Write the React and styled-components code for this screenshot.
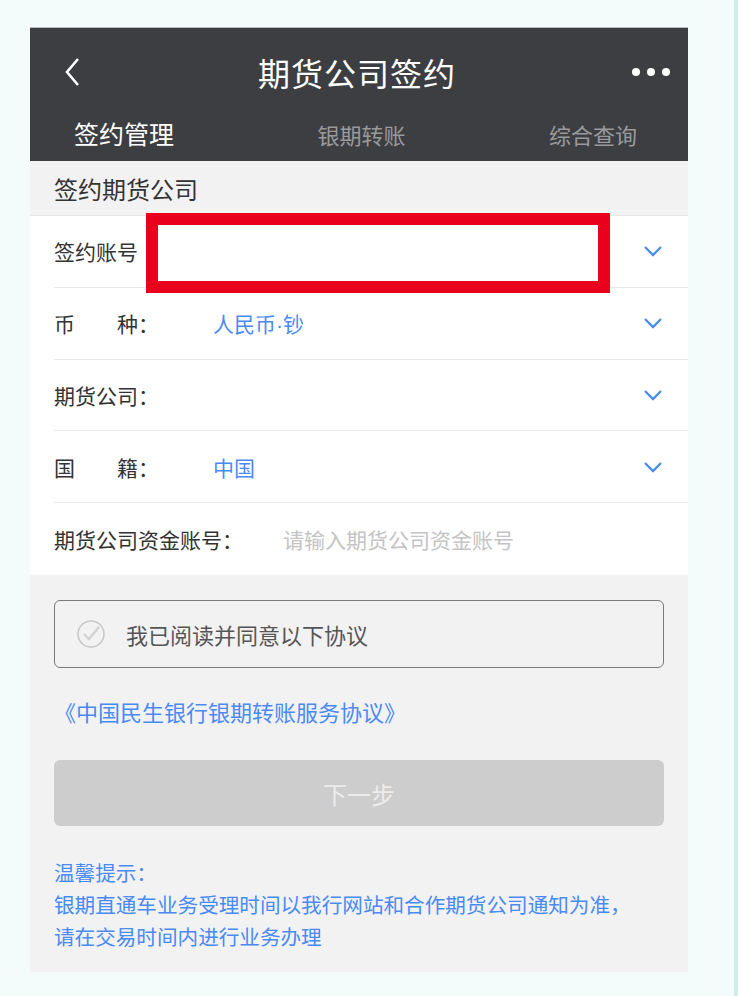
import styled, { createGlobalStyle } from 'styled-components'

const GlobalStyle = createGlobalStyle`
  html, body {
    margin: 0;
    padding: 0;
    background: #f4fbfb;
  }
  body {
    font-family: "Noto Sans CJK SC", "Noto Sans", sans-serif;
  }
`

const Page = styled.div`
  width: 738px;
  height: 996px;
  box-sizing: border-box;
  padding: 27px 0 0 30px;
  background: #f4fbfb;
  border-right: 4px solid #cdeeed;
`

const Phone = styled.div`
  width: 658px;
  height: 945px;
  background: #f2f2f2;
  display: flex;
  flex-direction: column;
  position: relative;
`

const Header = styled.div`
  background: #3d3e42;
  border-top: 1px solid #b8bcbc;
`

const TitleBar = styled.div`
  height: 88px;
  display: flex;
  align-items: center;
  justify-content: space-between;
  padding: 0 16px 0 34px;
`

const Title = styled.h1`
  margin: 0;
  color: #fff;
  font-size: 32px;
  font-weight: 400;
  letter-spacing: 1px;
`

const Dots = styled.div`
  display: flex;
  gap: 7px;
  width: 40px;
`

const Dot = styled.span`
  width: 8px;
  height: 8px;
  border-radius: 50%;
  background: #fff;
`

const Tabs = styled.div`
  height: 45px;
  display: flex;
  align-items: flex-start;
  justify-content: space-between;
  padding: 0 51px 0 44px;
`

const Tab = styled.span`
  color: ${p => (p.active ? '#fff' : '#9a9a9c')};
  font-size: ${p => (p.active ? '25px' : '22px')};
  line-height: ${p => (p.active ? '34px' : '32px')};
  margin-top: ${p => (p.active ? '0' : '2px')};
`

const SectionHead = styled.div`
  height: 55px;
  display: flex;
  align-items: center;
  padding-left: 24px;
  color: #333;
  font-size: 24px;
  border-bottom: 1px solid #e6e6e6;
  box-sizing: border-box;
`

const Form = styled.div`
  background: #fff;
`

const Row = styled.div`
  height: ${p => (p.last ? '72px' : '71.8px')};
  margin-left: 24px;
  padding-right: 25px;
  display: flex;
  align-items: center;
  box-sizing: border-box;
  border-bottom: ${p => (p.last ? 'none' : '1px solid #e8e8e8')};
  position: relative;
`

const Label = styled.span`
  width: ${p => (p.wide ? '229px' : '159px')};
  flex-shrink: 0;
  color: #333;
  font-size: 21px;
  white-space: pre;
`

const Value = styled.span`
  flex: 1;
  color: ${p => (p.placeholder ? '#c4c4c4' : '#4a8af4')};
  font-size: 21px;
`

const MidDot = styled.span`
  font-family: "Liberation Sans", sans-serif;
`

const Body = styled.div`
  flex: 1;
  padding: 25px 24px 0;
  display: flex;
  flex-direction: column;
`

const AgreeBox = styled.div`
  height: 68px;
  box-sizing: border-box;
  border: 1px solid #7a7a7a;
  border-radius: 6px;
  display: flex;
  align-items: center;
  padding-left: 21px;
  gap: 20px;
  color: #555;
  font-size: 22px;
`

const Protocol = styled.a`
  margin-top: 26px;
  color: #4a8af4;
  font-size: 22px;
  line-height: 34px;
  text-decoration: none;
`

const NextButton = styled.button`
  margin-top: 32px;
  height: 66px;
  border: 0;
  border-radius: 6px;
  background: #cdcdcd;
  color: #ececec;
  font-family: inherit;
  font-size: 24px;
`

const Tips = styled.div`
  margin-top: 30px;
  color: #4a8af4;
  font-size: 20.6px;
  line-height: 32px;
`

const Redact = styled.div`
  position: absolute;
  left: 92px;
  top: -3px;
  width: 464px;
  height: 80px;
  box-sizing: border-box;
  border: 12px solid #e8001c;
  background: #fff;
`

const Chevron = () => (
  <svg width="20" height="12" viewBox="0 0 20 12">
    <polyline points="2,2 10,10 18,2" fill="none" stroke="#4a8af4" strokeWidth="2.3" />
  </svg>
)

const Back = () => (
  <svg width="18" height="30" viewBox="0 0 18 30">
    <polyline points="14,2 3,15 14,28" fill="none" stroke="#fff" strokeWidth="2.6" />
  </svg>
)

const CheckCircle = () => (
  <svg width="30" height="30" viewBox="0 0 30 30">
    <circle cx="15" cy="15" r="13" fill="none" stroke="#c9c9c9" strokeWidth="1.6" />
    <polyline points="8,15 13,20 23,8" fill="none" stroke="#d2d2d2" strokeWidth="2.4" />
  </svg>
)

const rows = [
  { label: '期货公司：', value: '', arrow: true },
  { label: '国　　籍：', value: '中国', arrow: true },
]

export default function App() {
  return (
    <Page>
      <GlobalStyle />
      <Phone>
        <Header>
          <TitleBar>
            <Back />
            <Title>期货公司签约</Title>
            <Dots>
              <Dot />
              <Dot />
              <Dot />
            </Dots>
          </TitleBar>
          <Tabs>
            <Tab active>签约管理</Tab>
            <Tab>银期转账</Tab>
            <Tab>综合查询</Tab>
          </Tabs>
        </Header>

        <SectionHead>签约期货公司</SectionHead>

        <Form>
          <Row>
            <Label>签约账号</Label>
            <Value />
            <Chevron />
            <Redact />
          </Row>
          <Row>
            <Label>币　　种：</Label>
            <Value>人民币<MidDot>·</MidDot>钞</Value>
            <Chevron />
          </Row>
          {rows.map((item, key) => (
            <Row key={key}>
              <Label>{item.label}</Label>
              <Value>{item.value}</Value>
              {item.arrow && <Chevron />}
            </Row>
          ))}
          <Row last>
            <Label wide>期货公司资金账号：</Label>
            <Value placeholder>请输入期货公司资金账号</Value>
          </Row>
        </Form>

        <Body>
          <AgreeBox>
            <CheckCircle />
            我已阅读并同意以下协议
          </AgreeBox>
          <Protocol>《中国民生银行银期转账服务协议》</Protocol>
          <NextButton>下一步</NextButton>
          <Tips>
            温馨提示：
            <br />
            银期直通车业务受理时间以我行网站和合作期货公司通知为准，
            <br />
            请在交易时间内进行业务办理
          </Tips>
        </Body>
      </Phone>
    </Page>
  )
}
